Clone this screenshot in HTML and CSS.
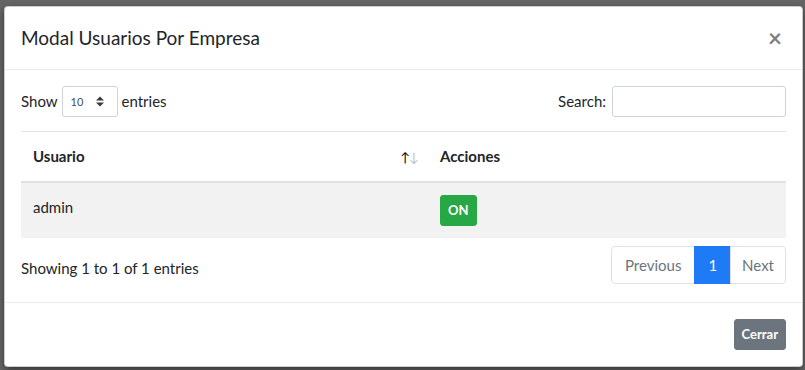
FILE: index.html
```html
<!DOCTYPE html>
<html lang="es">
<head>
  <meta charset="UTF-8" />
  <title>Modal Usuarios Por Empresa</title>
  <link rel="stylesheet" href="styles.css">
</head>
<body>

  <!-- fondo oscuro del modal -->
  <div class="backdrop">
    <div class="modal">

      <div class="modal-header">
        <h4 class="modal-title">Modal Usuarios Por Empresa</h4>
        <span class="close">&times;</span>
      </div>

      <div class="modal-body">
        <div class="dt-top">
          <label class="dt-length">
            Show
            <span class="select-sm">
              <span>10</span>
              <svg class="caret" width="8" height="11" viewBox="0 0 8 11">
                <path d="M0 4.5 L4 0.5 L8 4.5 Z M0 6.5 L4 10.5 L8 6.5 Z" fill="#343a40"/>
              </svg>
            </span>
            entries
          </label>
          <label class="dt-search">
            Search:
            <input type="search" class="input-sm">
          </label>
        </div>

        <table class="table">
          <thead>
            <tr>
              <th class="col-user">
                <div class="sort">
                  <span>Usuario</span>
                  <span class="arrows"><b class="up">&#8593;</b><b class="down">&#8595;</b></span>
                </div>
              </th>
              <th>Acciones</th>
            </tr>
          </thead>
          <tbody>
            <tr class="odd">
              <td>admin</td>
              <td><button class="btn-on">ON</button></td>
            </tr>
          </tbody>
        </table>

        <div class="dt-bottom">
          <div class="dt-info">Showing 1 to 1 of 1 entries</div>
          <ul class="pagination">
            <li class="page disabled">Previous</li>
            <li class="page active">1</li>
            <li class="page disabled">Next</li>
          </ul>
        </div>
      </div>

      <div class="modal-footer">
        <button class="btn-close">Cerrar</button>
      </div>

    </div>
  </div>

</body>
</html>
```

FILE: styles.css
```css
body {
  margin: 0;
  font-family: "Source Sans Pro", Lato, "Liberation Sans", sans-serif;
  font-size: 15px;
  color: #212529;
  background-color: #666;
}

.backdrop {
  width: 805px;
  height: 370px;
  padding: 6px 0 0 4px;
  box-sizing: border-box;
  background-color: #676767;
  overflow: hidden;
}

.modal {
  width: 799px;
  background-color: white;
  border: 1px solid rgba(0, 0, 0, 0.2);
  border-radius: 4px;
  box-sizing: border-box;
  box-shadow: 0 3px 8px rgba(0, 0, 0, 0.5);
}

/* ---------- cabecera ---------- */
.modal-header {
  display: flex;
  align-items: flex-start;
  justify-content: space-between;
  padding: 16px;
  border-bottom: 1px solid #e9ecef;
}

.modal-title {
  margin: 0;
  font-size: 19px;
  font-weight: 400;
  line-height: 30px;
}

.close {
  font-size: 24px;
  font-weight: 700;
  line-height: 30px;
  color: #000;
  opacity: 0.5;
  margin-right: 4px;
}

/* ---------- cuerpo ---------- */
.modal-body {
  padding: 16px;
}

.dt-top {
  display: flex;
  justify-content: space-between;
}

.dt-top label {
  display: flex;
  align-items: center;
  gap: 4px;
  margin-bottom: 8px;
  line-height: 27px;
  white-space: nowrap;
}

.select-sm {
  display: inline-flex;
  align-items: center;
  justify-content: space-between;
  width: 56px;
  height: 31px;
  box-sizing: border-box;
  padding: 0 13px 0 8px;
  border: 1px solid #ced4da;
  border-radius: 3px;
  font-size: 11px;
  color: #495057;
}

.input-sm {
  width: 174px;
  height: 31px;
  box-sizing: border-box;
  margin-left: 2px;
  border: 1px solid #ced4da;
  border-radius: 3px;
}

.table {
  width: 100%;
  border-collapse: collapse;
  margin: 6px 0;
}

.table th,
.table td {
  padding: 12px;
  line-height: 24px;
  text-align: left;
  vertical-align: top;
  border-top: 1px solid #dee2e6;
}

.table th {
  font-weight: 700;
  border-bottom: 2px solid #dee2e6;
}

.col-user {
  width: 383px;
}

.sort {
  display: flex;
  justify-content: space-between;
}

.arrows {
  margin-right: -2px;
  letter-spacing: -1px;
}

.arrows b {
  font-weight: 400;
  font-size: 13px;
}

.arrows .up {
  color: #000;
}

.arrows .down {
  opacity: 0.3;
}

.odd {
  background-color: #f2f2f2;
}

.btn-on {
  background-color: #28a745;
  color: white;
  border: 1px solid #28a745;
  border-radius: 3px;
  padding: 4px 7px;
  font-family: inherit;
  font-size: 13px;
  font-weight: 700;
  line-height: 21px;
}

.dt-bottom {
  display: flex;
  justify-content: space-between;
  align-items: flex-start;
}

.dt-info {
  padding-top: 15px;
}

.pagination {
  display: flex;
  list-style: none;
  margin: 2px 0;
  padding: 0;
}

.page {
  padding: 8px 13px;
  line-height: 20px;
  border: 1px solid #dee2e6;
  margin-left: -1px;
  color: #6c757d;
}

.page:last-child {
  padding: 8px 11px;
  border-radius: 0 4px 4px 0;
}

.page:first-child {
  border-radius: 4px 0 0 4px;
}

.page.active {
  background-color: #1f7bf5;
  border-color: #1f7bf5;
  color: white;
}

/* ---------- pie ---------- */
.modal-footer {
  display: flex;
  justify-content: flex-end;
  padding: 12px;
  border-top: 1px solid #e9ecef;
}

.btn-close {
  margin: 4px;
  background-color: #6c757d;
  color: white;
  border: 1px solid #6c757d;
  border-radius: 3px;
  padding: 4px 7px;
  font-family: inherit;
  font-size: 13px;
  font-weight: 700;
  line-height: 21px;
}
```
